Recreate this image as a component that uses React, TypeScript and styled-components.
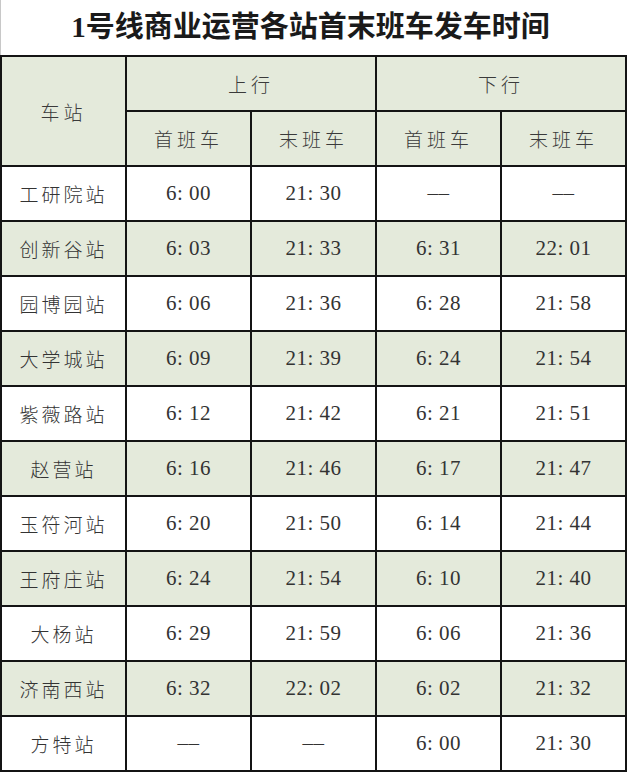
import React from "react";
import styled, { createGlobalStyle } from "styled-components";

const GlobalStyle = createGlobalStyle`
  html, body {
    margin: 0;
    padding: 0;
    background: #ffffff;
  }
`;

const Page = styled.div`
  width: 628px;
  height: 772px;
  overflow: hidden;
  background: #ffffff;
`;

const Title = styled.h1`
  margin: 0;
  height: 55px;
  box-sizing: border-box;
  border-left: 1px solid #c8c8c8;
  display: flex;
  align-items: center;
  justify-content: center;
  padding: 0 8px 8px 0;
  font-family: "Liberation Serif", "Noto Sans CJK SC", serif;
  font-weight: 700;
  font-size: 29px;
  color: #1a1a1a;
`;

const Table = styled.table`
  width: 627px;
  border-collapse: collapse;
  table-layout: fixed;
  border: 2px solid #141414;
`;

const Row = styled.tr<{ $shaded?: boolean }>`
  height: 55px;
  background: ${(p) => (p.$shaded ? "#e4eadb" : "#ffffff")};
`;

const HeadCell = styled.th`
  border: 2px solid #141414;
  background: #e4eadb;
  font-family: "Noto Sans CJK SC", sans-serif;
  font-weight: 300;
  font-size: 19px;
  letter-spacing: 4px;
  color: #3a3a3a;
  text-align: center;
  padding: 0;
`;

const Cell = styled.td<{ $cjk?: boolean }>`
  border: 2px solid #141414;
  text-align: center;
  padding: 0;
  color: #333333;
  font-family: ${(p) =>
    p.$cjk
      ? `"Noto Sans CJK SC", sans-serif`
      : `"Liberation Serif", "Noto Sans CJK SC", serif`};
  font-weight: ${(p) => (p.$cjk ? 300 : 400)};
  font-size: ${(p) => (p.$cjk ? "19px" : "21px")};
  letter-spacing: ${(p) => (p.$cjk ? "3px" : "0.5px")};
`;

const NONE = "\u2013\u2013";

const rows: [string, string, string, string, string][] = [
  ["工研院站", "6: 00", "21: 30", NONE, NONE],
  ["创新谷站", "6: 03", "21: 33", "6: 31", "22: 01"],
  ["园博园站", "6: 06", "21: 36", "6: 28", "21: 58"],
  ["大学城站", "6: 09", "21: 39", "6: 24", "21: 54"],
  ["紫薇路站", "6: 12", "21: 42", "6: 21", "21: 51"],
  ["赵营站", "6: 16", "21: 46", "6: 17", "21: 47"],
  ["玉符河站", "6: 20", "21: 50", "6: 14", "21: 44"],
  ["王府庄站", "6: 24", "21: 54", "6: 10", "21: 40"],
  ["大杨站", "6: 29", "21: 59", "6: 06", "21: 36"],
  ["济南西站", "6: 32", "22: 02", "6: 02", "21: 32"],
  ["方特站", NONE, NONE, "6: 00", "21: 30"],
];

export default function App() {
  return (
    <Page>
      <GlobalStyle />
      <Title>1号线商业运营各站首末班车发车时间</Title>
      <Table>
        <colgroup>
          <col style={{ width: 125 }} />
          <col style={{ width: 125 }} />
          <col style={{ width: 125 }} />
          <col style={{ width: 125 }} />
          <col style={{ width: 125 }} />
        </colgroup>
        <thead>
          <Row $shaded>
            <HeadCell rowSpan={2}>车站</HeadCell>
            <HeadCell colSpan={2}>上行</HeadCell>
            <HeadCell colSpan={2}>下行</HeadCell>
          </Row>
          <Row $shaded>
            <HeadCell>首班车</HeadCell>
            <HeadCell>末班车</HeadCell>
            <HeadCell>首班车</HeadCell>
            <HeadCell>末班车</HeadCell>
          </Row>
        </thead>
        <tbody>
          {rows.map((r, i) => (
            <Row key={r[0]} $shaded={i % 2 === 1}>
              <Cell $cjk>{r[0]}</Cell>
              {r.slice(1).map((v, j) => (
                <Cell key={j}>{v}</Cell>
              ))}
            </Row>
          ))}
        </tbody>
      </Table>
    </Page>
  );
}
